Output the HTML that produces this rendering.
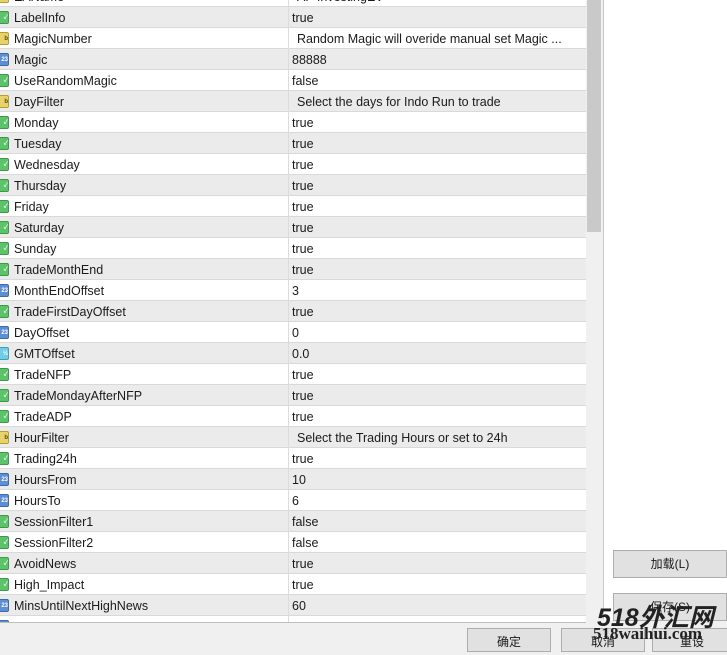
<!DOCTYPE html>
<html><head><meta charset="utf-8"><style>
*{margin:0;padding:0;box-sizing:border-box}
body{width:727px;height:647px;overflow:hidden;background:#f0f0f0;position:relative;font-family:"Liberation Sans","Noto Sans CJK SC",sans-serif;font-size:12.5px;color:#1a1a1a}
#tbl{position:absolute;left:0;top:0;width:586px;height:623px;overflow:hidden;background:#fff;border-bottom:1px solid #bdbdbd}
.r{position:absolute;left:0;width:586px;height:21px;border-bottom:1px solid #d9d9d9;background:#fff}
.r.g{background:#ebebeb}
.n{position:absolute;left:14px;top:4px;white-space:nowrap}
.v{position:absolute;left:292px;top:4px;white-space:nowrap}
.v.s{left:297px}
.d{position:absolute;left:288px;top:0;width:1px;height:21px;background:#dcdcdc}
.i{position:absolute;left:-2px;top:4px;width:11px;height:13px;border-radius:2px;font-size:6px;line-height:13px;text-align:right;font-weight:bold;overflow:hidden}
.b{background:#5cc36a;border:1px solid #3a9a48;color:#fff}
.a{background:#e8d36a;border:1px solid #b79e2c;color:#5a4a00}
.t{background:#5d8fd6;border:1px solid #3a6ab0;color:#fff}
.f{background:#6fcde6;border:1px solid #3aa0bd;color:#fff}
#sb{position:absolute;left:586px;top:0;width:16px;height:623px;background:#f0f0f0}
#th{position:absolute;left:587px;top:0;width:14px;height:232px;background:#c9c9c9}
#rp{position:absolute;left:603px;top:0;width:124px;height:620px;background:#fff;border-left:1px solid #c8c8c8}
.btn{position:absolute;background:#e1e1e1;border:1px solid #adadad;font-size:12px;text-align:center;line-height:26px}
.wm{position:absolute;font-family:"Liberation Serif",serif;color:#222;white-space:nowrap}
</style></head><body>
<div id="tbl">
<div class="r" style="top:-14px"><div class="i a">b</div><div class="n">EAName</div><div class="d"></div><div class="v s">AP InvestingEV</div></div>
<div class="r g" style="top:7px"><div class="i b">✓</div><div class="n">LabelInfo</div><div class="d"></div><div class="v">true</div></div>
<div class="r" style="top:28px"><div class="i a">b</div><div class="n">MagicNumber</div><div class="d"></div><div class="v s">Random Magic will overide manual set Magic ...</div></div>
<div class="r g" style="top:49px"><div class="i t">23</div><div class="n">Magic</div><div class="d"></div><div class="v">88888</div></div>
<div class="r" style="top:70px"><div class="i b">✓</div><div class="n">UseRandomMagic</div><div class="d"></div><div class="v">false</div></div>
<div class="r g" style="top:91px"><div class="i a">b</div><div class="n">DayFilter</div><div class="d"></div><div class="v s">Select the days for Indo Run to trade</div></div>
<div class="r" style="top:112px"><div class="i b">✓</div><div class="n">Monday</div><div class="d"></div><div class="v">true</div></div>
<div class="r g" style="top:133px"><div class="i b">✓</div><div class="n">Tuesday</div><div class="d"></div><div class="v">true</div></div>
<div class="r" style="top:154px"><div class="i b">✓</div><div class="n">Wednesday</div><div class="d"></div><div class="v">true</div></div>
<div class="r g" style="top:175px"><div class="i b">✓</div><div class="n">Thursday</div><div class="d"></div><div class="v">true</div></div>
<div class="r" style="top:196px"><div class="i b">✓</div><div class="n">Friday</div><div class="d"></div><div class="v">true</div></div>
<div class="r g" style="top:217px"><div class="i b">✓</div><div class="n">Saturday</div><div class="d"></div><div class="v">true</div></div>
<div class="r" style="top:238px"><div class="i b">✓</div><div class="n">Sunday</div><div class="d"></div><div class="v">true</div></div>
<div class="r g" style="top:259px"><div class="i b">✓</div><div class="n">TradeMonthEnd</div><div class="d"></div><div class="v">true</div></div>
<div class="r" style="top:280px"><div class="i t">23</div><div class="n">MonthEndOffset</div><div class="d"></div><div class="v">3</div></div>
<div class="r g" style="top:301px"><div class="i b">✓</div><div class="n">TradeFirstDayOffset</div><div class="d"></div><div class="v">true</div></div>
<div class="r" style="top:322px"><div class="i t">23</div><div class="n">DayOffset</div><div class="d"></div><div class="v">0</div></div>
<div class="r g" style="top:343px"><div class="i f">½</div><div class="n">GMTOffset</div><div class="d"></div><div class="v">0.0</div></div>
<div class="r" style="top:364px"><div class="i b">✓</div><div class="n">TradeNFP</div><div class="d"></div><div class="v">true</div></div>
<div class="r g" style="top:385px"><div class="i b">✓</div><div class="n">TradeMondayAfterNFP</div><div class="d"></div><div class="v">true</div></div>
<div class="r" style="top:406px"><div class="i b">✓</div><div class="n">TradeADP</div><div class="d"></div><div class="v">true</div></div>
<div class="r g" style="top:427px"><div class="i a">b</div><div class="n">HourFilter</div><div class="d"></div><div class="v s">Select the Trading Hours or set to 24h</div></div>
<div class="r" style="top:448px"><div class="i b">✓</div><div class="n">Trading24h</div><div class="d"></div><div class="v">true</div></div>
<div class="r g" style="top:469px"><div class="i t">23</div><div class="n">HoursFrom</div><div class="d"></div><div class="v">10</div></div>
<div class="r" style="top:490px"><div class="i t">23</div><div class="n">HoursTo</div><div class="d"></div><div class="v">6</div></div>
<div class="r g" style="top:511px"><div class="i b">✓</div><div class="n">SessionFilter1</div><div class="d"></div><div class="v">false</div></div>
<div class="r" style="top:532px"><div class="i b">✓</div><div class="n">SessionFilter2</div><div class="d"></div><div class="v">false</div></div>
<div class="r g" style="top:553px"><div class="i b">✓</div><div class="n">AvoidNews</div><div class="d"></div><div class="v">true</div></div>
<div class="r" style="top:574px"><div class="i b">✓</div><div class="n">High_Impact</div><div class="d"></div><div class="v">true</div></div>
<div class="r g" style="top:595px"><div class="i t">23</div><div class="n">MinsUntilNextHighNews</div><div class="d"></div><div class="v">60</div></div>
<div class="r" style="top:616px"><div class="i t">23</div><div class="d"></div></div>
</div>
<div id="sb"></div><div id="th"></div>
<div id="rp"></div>
<div class="btn" style="left:613px;top:550px;width:114px;height:28px">加载(L)</div>
<div class="btn" style="left:613px;top:593px;width:114px;height:28px">保存(S)</div>
<div class="btn" style="left:467px;top:628px;width:84px;height:24px">确定</div>
<div class="btn" style="left:561px;top:628px;width:84px;height:24px">取消</div>
<div class="btn" style="left:652px;top:628px;width:80px;height:24px">重设</div>
<div class="wm" style="left:597px;top:598px;font-size:25px;font-style:italic;font-weight:bold;font-family:'Liberation Sans','Noto Sans CJK SC',sans-serif">518外汇网</div>
<div class="wm" style="left:593px;top:624px;font-size:17px;font-weight:bold">518waihui.com</div>
</body></html>
